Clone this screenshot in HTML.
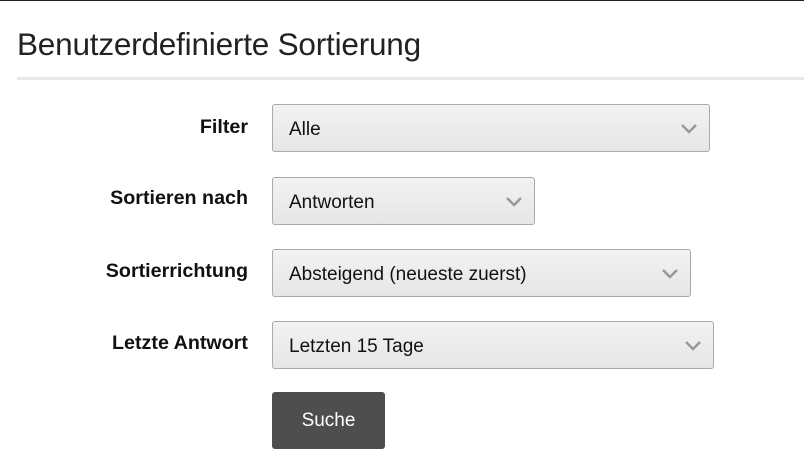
<!DOCTYPE html>
<html><head><style>
body{margin:0;width:804px;height:453px;background:#fff;font-family:"Liberation Sans",sans-serif;position:relative;overflow:hidden;border-top:1px solid #222;box-sizing:border-box}
h1{position:absolute;left:17px;top:25px;margin:0;font-weight:normal;font-size:31.5px;color:#222;letter-spacing:-0.2px}
.rule{position:absolute;left:17px;right:0;top:76px;height:3px;background:#e8e8e8}
.lbl{position:absolute;right:556px;font-weight:bold;font-size:19.7px;color:#111}
.sel{position:absolute;left:272px;height:48px;border:1px solid #aaa;border-radius:3px;background:linear-gradient(#f2f2f2,#e6e6e6);box-sizing:border-box;font-size:19px;color:#111;padding:14px 0 0 16px}
.sel svg{position:absolute;right:12px;top:19px}
.btn{position:absolute;left:272px;top:391px;width:113px;height:57px;background:#4e4e4e;border-radius:3px;color:#fff;font-size:19px;text-align:center;line-height:57px}
</style></head><body>
<h1>Benutzerdefinierte Sortierung</h1>
<div class="rule"></div>
<div class="lbl" style="top:115px">Filter</div>
<div class="sel" style="top:103px;width:438px">Alle<svg width="16" height="10"><path d="M1 1l7 7 7-7" stroke="#999" stroke-width="2.5" fill="none"/></svg></div>
<div class="lbl" style="top:186px">Sortieren nach</div>
<div class="sel" style="top:176px;width:263px">Antworten<svg width="16" height="10"><path d="M1 1l7 7 7-7" stroke="#999" stroke-width="2.5" fill="none"/></svg></div>
<div class="lbl" style="top:259px">Sortierrichtung</div>
<div class="sel" style="top:248px;width:419px">Absteigend (neueste zuerst)<svg width="16" height="10"><path d="M1 1l7 7 7-7" stroke="#999" stroke-width="2.5" fill="none"/></svg></div>
<div class="lbl" style="top:331px">Letzte Antwort</div>
<div class="sel" style="top:320px;width:442px">Letzten 15 Tage<svg width="16" height="10"><path d="M1 1l7 7 7-7" stroke="#999" stroke-width="2.5" fill="none"/></svg></div>
<div class="btn">Suche</div>
</body></html>
